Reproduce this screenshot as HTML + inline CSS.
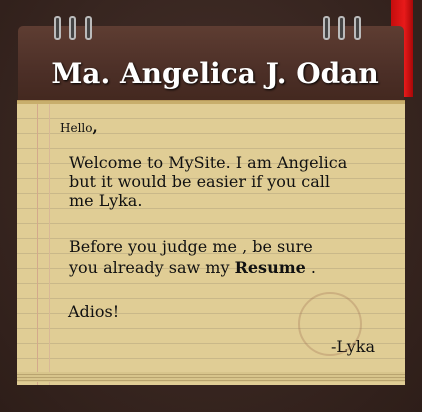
<!DOCTYPE html>
<html><head><style>
body{margin:0;width:422px;height:412px;background:#3b2822;position:relative;overflow:hidden;font-family:"DejaVu Serif","Liberation Serif",serif}
.bg{position:absolute;inset:0;background:radial-gradient(ellipse at 50% 40%,#45302a,#2e1e19)}
.rib{position:absolute;left:391px;top:0;width:22px;height:97px;background:linear-gradient(90deg,#c40d0d,#e81a1a 60%,#a80808)}
.hdr{position:absolute;left:18px;top:26px;width:386px;height:76px;border-radius:5px 5px 0 0;background:linear-gradient(#5e3d32,#4c2f27 60%,#43281f)}
.paper{position:absolute;left:17px;top:101px;width:388px;height:281px;background-color:#e0cd95;
background-image:linear-gradient(90deg,transparent 20px,#d3a98b 20px,#d3a98b 21px,transparent 21px,transparent 32px,#d8b896 32px,#d8b896 33px,transparent 33px),repeating-linear-gradient(transparent 0,transparent 14px,#c9b889 14px,#c9b889 15px);
border-top:3px solid #c8ae6c;box-shadow:0 -1px 0 #b89a5a}
.edge{position:absolute;left:17px;top:372px;width:388px;height:10px;background:repeating-linear-gradient(#d8c58c 0,#d8c58c 2px,#b9a46f 2px,#b9a46f 3px)}
.ring{position:absolute;top:16px;width:3px;height:20px;border:2px solid #bbb;border-radius:3px;background:#444}
h1{position:absolute;left:0;width:430px;top:57px;margin:0;text-align:center;color:#fff;font-size:28px;font-weight:bold;text-shadow:1px 1px 2px #000}
.t{position:absolute;color:#111;font-size:16px;line-height:19px}
</style></head><body>
<div class="bg"></div>
<div class="rib"></div>
<div class="hdr"></div>
<div class="ring" style="left:54px"></div><div class="ring" style="left:69px"></div><div class="ring" style="left:85px"></div>
<div class="ring" style="left:323px"></div><div class="ring" style="left:338px"></div><div class="ring" style="left:354px"></div>
<h1>Ma. Angelica J. Odan</h1>
<div class="paper"></div>
<div class="edge"></div>
<div class="t" style="left:60px;top:118px;font-size:12px">Hello<b style="font-size:15px">,</b></div>
<div class="t" style="left:69px;top:153px">Welcome to MySite. I am Angelica<br>but it would be easier if you call<br>me Lyka.</div>
<div class="t" style="left:69px;top:236px;line-height:21px">Before you judge me , be sure<br>you already saw my <b>Resume</b> .</div>
<div class="t" style="left:68px;top:302px">Adios!</div>
<div class="t" style="left:331px;top:337px">-Lyka</div>
<div style="position:absolute;left:298px;top:292px;width:60px;height:60px;border:2px solid rgba(160,110,80,.3);border-radius:50%"></div>
</body></html>
